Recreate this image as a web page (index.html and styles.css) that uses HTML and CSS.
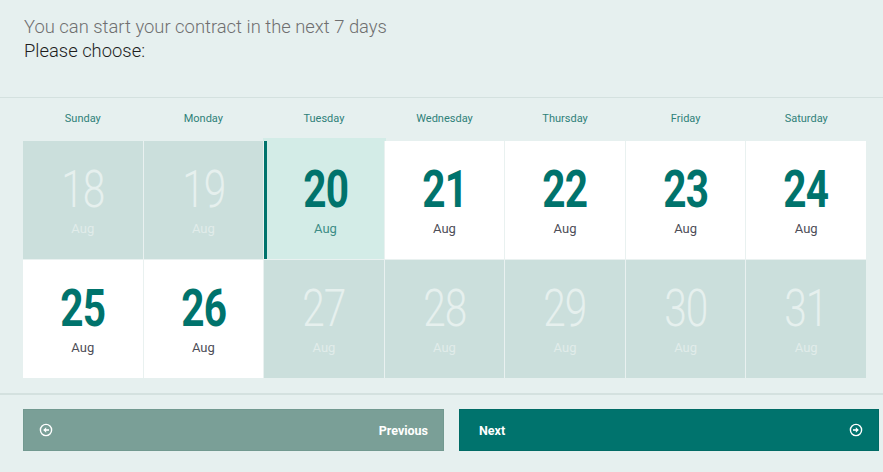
FILE: index.html
```html
<!DOCTYPE html>
<html lang="en">
<head>
<meta charset="utf-8">
<title>Choose start date</title>
<link rel="stylesheet" href="styles.css">
</head>
<body>
<header class="intro">
  <p class="lead">You can start your contract in the next 7 days</p>
  <p class="prompt">Please choose:</p>
</header>
<section class="calendar">
  <div class="weekdays">
    <span>Sunday</span><span>Monday</span><span>Tuesday</span><span>Wednesday</span><span>Thursday</span><span>Friday</span><span>Saturday</span>
  </div>
  <div class="days">
    <div class="day past"><span class="num">18</span><span class="mon">Aug</span></div>
    <div class="day past"><span class="num">19</span><span class="mon">Aug</span></div>
    <div class="day selected"><span class="num">20</span><span class="mon">Aug</span></div>
    <div class="day"><span class="num">21</span><span class="mon">Aug</span></div>
    <div class="day"><span class="num">22</span><span class="mon">Aug</span></div>
    <div class="day"><span class="num">23</span><span class="mon">Aug</span></div>
    <div class="day"><span class="num">24</span><span class="mon">Aug</span></div>
    <div class="day"><span class="num">25</span><span class="mon">Aug</span></div>
    <div class="day"><span class="num">26</span><span class="mon">Aug</span></div>
    <div class="day past"><span class="num">27</span><span class="mon">Aug</span></div>
    <div class="day past"><span class="num">28</span><span class="mon">Aug</span></div>
    <div class="day past"><span class="num">29</span><span class="mon">Aug</span></div>
    <div class="day past"><span class="num">30</span><span class="mon">Aug</span></div>
    <div class="day past"><span class="num">31</span><span class="mon">Aug</span></div>
  </div>
</section>
<footer class="actions">
  <button class="btn btn-prev">
    <svg class="icon" viewBox="0 0 14 14" width="14" height="14"><circle cx="7" cy="7" r="5.6" fill="none" stroke="#fff" stroke-width="1.4"/><path d="M10 7H5.2" stroke="#fff" stroke-width="1.6" fill="none"/><path d="M7.2 4.2L4.2 7L7.2 9.8Z" fill="#fff"/></svg>
    <span>Previous</span>
  </button>
  <button class="btn btn-next">
    <span>Next</span>
    <svg class="icon" viewBox="0 0 14 14" width="14" height="14"><circle cx="7" cy="7" r="5.6" fill="none" stroke="#fff" stroke-width="1.4"/><path d="M4 7H8.8" stroke="#fff" stroke-width="1.6" fill="none"/><path d="M6.8 4.2L9.8 7L6.8 9.8Z" fill="#fff"/></svg>
  </button>
</footer>
</body>
</html>
```
FILE: styles.css
```css
* { box-sizing: border-box; }
html, body { margin: 0; padding: 0; }
body {
  background: #e6f0ef;
  font-family: Roboto, "Liberation Sans", Arial, sans-serif;
  width: 883px;
  height: 472px;
  overflow: hidden;
}
.intro {
  height: 98px;
  padding: 15px 24px 0;
  border-bottom: 1px solid #d4e1df;
}
.intro p { margin: 0; font-size: 18.4px; line-height: 24px; font-weight: 300; }
.lead { color: #6f6f6f; }
.prompt { color: #1e1e1e; }

.calendar { padding: 0 17px 15px 23px; border-bottom: 2px solid #d4e1df; }
.weekdays {
  display: grid;
  grid-template-columns: repeat(7, 1fr);
  column-gap: 1px;
  height: 43px;
  padding-top: 14px;
}
.weekdays span {
  text-align: center;
  font-size: 11px;
  line-height: 14px;
  color: #2f8179;
}
.days {
  display: grid;
  grid-template-columns: repeat(7, 1fr);
  grid-auto-rows: 118px;
  gap: 1px;
  background: #e9f1f0;
}
.day {
  position: relative;
  background: #fff;
  display: flex;
  flex-direction: column;
  align-items: center;
  padding-top: 23px;
}
.num {
  display: inline-block;
  font-size: 52px;
  line-height: 52px;
  font-weight: 700;
  color: #00736c;
  transform: scaleX(0.78);
  letter-spacing: -1px;
}
.mon {
  margin-top: 5px;
  font-size: 13px;
  line-height: 16px;
  color: #4e4e58;
}
.day.past { background: #cbdfdc; }
.day.past .num { font-weight: 300; color: #e6f0ee; }
.day.past .mon { color: #e1ecea; }
.day.selected { background: #d3ece7; border-left: 3px solid #00736c; }
.day.selected::before {
  content: "";
  position: absolute;
  left: -4px; right: -2px; top: -3px; height: 3px;
  background: #d3ece7;
}
.day.selected .mon { color: #3d8c86; }

.actions {
  display: flex;
  gap: 15px;
  padding: 14px 4px 0 23px;
}
.btn {
  height: 42px;
  display: flex;
  align-items: center;
  justify-content: space-between;
  font-family: Roboto, "Liberation Sans", Arial, sans-serif;
  font-size: 12.5px;
  font-weight: 700;
  color: #fff;
  cursor: pointer;
}
.btn-prev {
  width: 421px;
  background: #7a9f97;
  border: 1px solid #729990;
  padding: 0 15px 0 15px;
}
.btn-next {
  width: 420px;
  background: #00736d;
  border: 1px solid #006b65;
  padding: 0 15px 0 19px;
}
.icon { display: block; }
```
